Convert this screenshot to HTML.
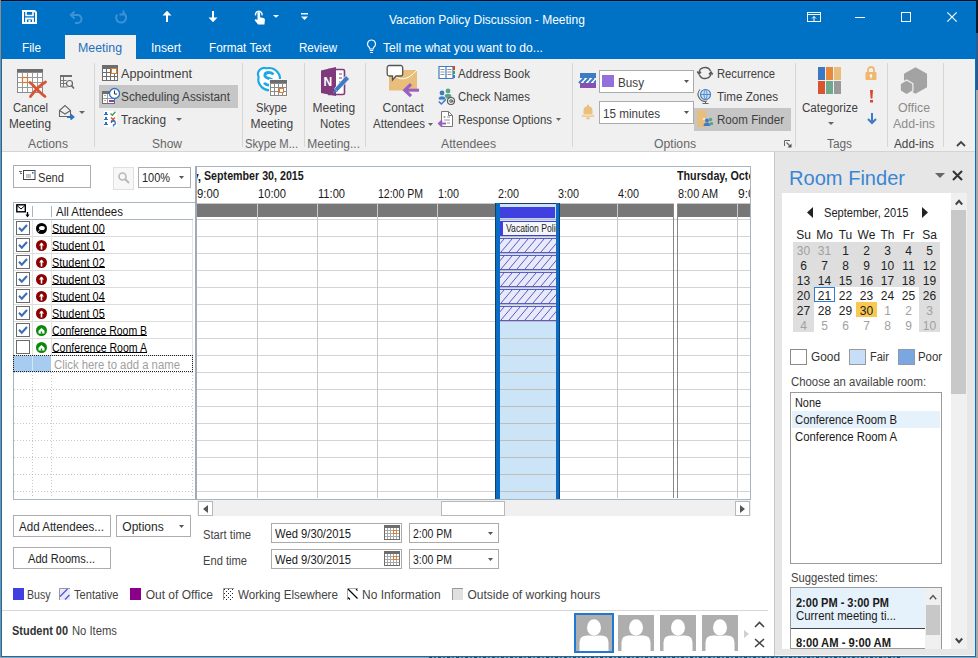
<!DOCTYPE html>
<html><head><meta charset="utf-8"><style>
html,body{margin:0;padding:0;width:978px;height:658px;overflow:hidden;background:#fff;}
.a{position:absolute;box-sizing:border-box;}
.t{white-space:pre;font-family:"Liberation Sans",sans-serif;}
svg.a{overflow:visible;}
</style></head><body>
<div class="a" style="left:0px;top:0px;width:978px;height:658px;background:#ffffff;"></div>
<div class="a" style="left:976px;top:0px;width:2px;height:33px;background:#0b1a2c;"></div>
<div class="a" style="left:976px;top:33px;width:2px;height:57px;background:#2a5a8e;"></div>
<div class="a" style="left:976px;top:90px;width:2px;height:568px;background:#a8a8a8;"></div>
<div class="a" style="left:0px;top:0px;width:1px;height:658px;background:#968a80;"></div>
<div class="a" style="left:0px;top:657px;width:978px;height:1px;background:#a89c94;"></div>
<div class="a" style="left:1px;top:0px;width:975px;height:1px;background:#020a18;"></div>
<div class="a" style="left:1px;top:1px;width:975px;height:58px;background:#0072c6;"></div>
<div class="a" style="left:1px;top:1px;width:975px;height:1px;background:#0a7ad0;"></div>
<div class="a" style="left:1px;top:59px;width:1px;height:598px;background:#0072c6;"></div>
<div class="a" style="left:975px;top:59px;width:1px;height:598px;background:#0072c6;"></div>
<div class="a" style="left:1px;top:656px;width:975px;height:1px;background:#0072c6;"></div>
<div class="a" style="left:2px;top:59px;width:973px;height:92px;background:#f0f0f0;"></div>
<div class="a" style="left:2px;top:151px;width:973px;height:1px;background:#d4d4d4;"></div>
<div class="a" style="left:65px;top:35px;width:71px;height:24px;background:#f0f0f0;"></div>
<div class="a t" style="left:389.00px;top:14.00px;font-size:12.00px;line-height:12.00px;font-weight:400;color:#ffffff;">Vacation Policy Discussion - Meeting</div>
<div class="a t" style="left:22.00px;top:42.00px;font-size:12.00px;line-height:12.00px;font-weight:400;color:#ffffff;transform:scaleX(0.983);transform-origin:left;">File</div>
<div class="a t" style="left:78.00px;top:42.00px;font-size:12.00px;line-height:12.00px;font-weight:400;color:#1e6fbd;transform:scaleX(1.031);transform-origin:left;">Meeting</div>
<div class="a t" style="left:151.00px;top:42.00px;font-size:12.00px;line-height:12.00px;font-weight:400;color:#ffffff;">Insert</div>
<div class="a t" style="left:209.00px;top:42.00px;font-size:12.00px;line-height:12.00px;font-weight:400;color:#ffffff;transform:scaleX(0.982);transform-origin:left;">Format Text</div>
<div class="a t" style="left:299.00px;top:42.00px;font-size:12.00px;line-height:12.00px;font-weight:400;color:#ffffff;transform:scaleX(0.966);transform-origin:left;">Review</div>
<div class="a t" style="left:383.00px;top:42.00px;font-size:12.00px;line-height:12.00px;font-weight:400;color:#ffffff;transform:scaleX(1.012);transform-origin:left;">Tell me what you want to do...</div>
<div class="a" style="left:2px;top:152px;width:773px;height:504px;background:#ffffff;"></div>
<div class="a" style="left:775px;top:152px;width:200px;height:503px;background:#e6e6e6;"></div>
<div class="a" style="left:775px;top:655px;width:200px;height:1px;background:#fbf6f0;"></div>
<div class="a" style="left:774px;top:152px;width:1px;height:504px;background:#c6c6c6;"></div>
<svg class="a" style="left:22px;top:10px;" width="15" height="14" viewBox="0 0 15 14"><path d="M1 1h11.5l1.5 1.5V13H1z" fill="none" stroke="#fff" stroke-width="2"/><path d="M4 1v4.5h7V1" fill="none" stroke="#fff" stroke-width="1.6"/><path d="M4 13V8.5h7V13" fill="none" stroke="#fff" stroke-width="1.8"/><rect x="6.5" y="10" width="2" height="3" fill="#fff"/></svg>
<svg class="a" style="left:68px;top:10px;" width="15" height="14" viewBox="0 0 15 14"><path d="M3.5 5h6a4 4 0 0 1 0 8H7" fill="none" stroke="#3f90d8" stroke-width="2"/><path d="M6.5 1.5L2.8 5l3.7 3.5" fill="none" stroke="#3f90d8" stroke-width="2"/></svg>
<svg class="a" style="left:114px;top:10px;" width="14" height="14" viewBox="0 0 14 14"><path d="M9.5 3.2A5 5 0 1 1 3.2 4.5" fill="none" stroke="#3f90d8" stroke-width="2"/><path d="M9.5 0.5v4h-4" fill="none" stroke="#3f90d8" stroke-width="1.8"/></svg>
<svg class="a" style="left:162px;top:10px;" width="10" height="12" viewBox="0 0 10 12"><path d="M5 12V3" stroke="#fff" stroke-width="2"/><path d="M0.5 5.5L5 0.8l4.5 4.7z" fill="#fff"/></svg>
<svg class="a" style="left:208px;top:11px;" width="10" height="12" viewBox="0 0 10 12"><path d="M5 0v9" stroke="#fff" stroke-width="2"/><path d="M0.5 6.5L5 11.2l4.5-4.7z" fill="#fff"/></svg>
<svg class="a" style="left:253px;top:9px;" width="13" height="16" viewBox="0 0 13 16"><path d="M4.5 9.5V4.2a1.3 1.3 0 0 1 2.6 0V8.3l3.3.8c1 .3 1.6 1 1.5 2l-.5 4.4H5.2L2 11.8c-.6-.7 0-1.8 1-1.5l1.5.7z" fill="#fff"/><path d="M2.6 6.3a3.3 3.3 0 1 1 6.4 0" fill="none" stroke="#fff" stroke-width="1.4"/></svg>
<svg class="a" style="left:273px;top:15px;" width="6" height="3" viewBox="0 0 6 3"><path d="M0 0h6L3 2.8z" fill="#fff"/></svg>
<svg class="a" style="left:301px;top:13px;" width="7" height="8" viewBox="0 0 7 8"><rect x="0" y="0" width="7" height="1.5" fill="#fff"/><path d="M0 3.5h7L3.5 7z" fill="#fff"/></svg>
<svg class="a" style="left:807px;top:12px;" width="14" height="10" viewBox="0 0 14 10"><rect x="0.5" y="0.5" width="13" height="9" fill="none" stroke="#fff"/><path d="M0.5 2.5h13" stroke="#fff"/><path d="M7 9V4.5M5 6.5L7 4.5 9 6.5" fill="none" stroke="#fff"/></svg>
<div class="a" style="left:855px;top:17px;width:10px;height:1px;background:#ffffff;"></div>
<div class="a" style="left:901px;top:12px;width:10px;height:10px;box-shadow:inset 0 0 0 1px #ffffff;"></div>
<svg class="a" style="left:947px;top:12px;" width="10" height="10" viewBox="0 0 10 10"><path d="M0.3 0.3l9.4 9.4M9.7 0.3l-9.4 9.4" stroke="#fff" stroke-width="1.1"/></svg>
<svg class="a" style="left:366px;top:39px;" width="11" height="15" viewBox="0 0 11 15"><path d="M5.5 1a4 4 0 0 0-2.4 7.2c.5.5.7 1 .7 1.8h3.4c0-.8.2-1.3.7-1.8A4 4 0 0 0 5.5 1z" fill="none" stroke="#fff" stroke-width="1.1"/><path d="M3.8 11.5h3.4M4.2 13.5h2.6" stroke="#fff" stroke-width="1.1"/></svg>
<div class="a" style="left:94px;top:63px;width:1px;height:84px;background:#d6d6d6;"></div>
<div class="a" style="left:242px;top:63px;width:1px;height:84px;background:#d6d6d6;"></div>
<div class="a" style="left:304px;top:63px;width:1px;height:84px;background:#d6d6d6;"></div>
<div class="a" style="left:365px;top:63px;width:1px;height:84px;background:#d6d6d6;"></div>
<div class="a" style="left:572px;top:63px;width:1px;height:84px;background:#d6d6d6;"></div>
<div class="a" style="left:795px;top:63px;width:1px;height:84px;background:#d6d6d6;"></div>
<div class="a" style="left:887px;top:63px;width:1px;height:84px;background:#d6d6d6;"></div>
<div class="a t" style="left:28.00px;top:138.00px;font-size:12.00px;line-height:12.00px;font-weight:400;color:#666666;transform:scaleX(1.016);transform-origin:left;">Actions</div>
<div class="a t" style="left:152.00px;top:138.00px;font-size:12.00px;line-height:12.00px;font-weight:400;color:#666666;">Show</div>
<div class="a t" style="left:245.00px;top:138.00px;font-size:12.00px;line-height:12.00px;font-weight:400;color:#666666;transform:scaleX(0.935);transform-origin:left;">Skype M...</div>
<div class="a t" style="left:307.30px;top:138.00px;font-size:12.00px;line-height:12.00px;font-weight:400;color:#666666;">Meeting...</div>
<div class="a t" style="left:441.00px;top:138.00px;font-size:12.00px;line-height:12.00px;font-weight:400;color:#666666;transform:scaleX(1.018);transform-origin:left;">Attendees</div>
<div class="a t" style="left:654.00px;top:138.00px;font-size:12.00px;line-height:12.00px;font-weight:400;color:#666666;transform:scaleX(1.016);transform-origin:left;">Options</div>
<div class="a t" style="left:827.00px;top:138.00px;font-size:12.00px;line-height:12.00px;font-weight:400;color:#666666;transform:scaleX(0.986);transform-origin:left;">Tags</div>
<div class="a t" style="left:894.00px;top:138.00px;font-size:12.00px;line-height:12.00px;font-weight:400;color:#444;transform:scaleX(0.983);transform-origin:left;">Add-ins</div>
<svg class="a" style="left:784px;top:140px;" width="8" height="8" viewBox="0 0 8 8"><path d="M0.5 6V0.5H6" fill="none" stroke="#666"/><path d="M2.5 2.5l3.5 3.5" stroke="#666" stroke-width="1.1"/><path d="M7.5 3.5V7.5H3.5z" fill="#555"/></svg>
<svg class="a" style="left:956px;top:140px;" width="10" height="7" viewBox="0 0 10 7"><path d="M1 6L5 2l4 4" fill="none" stroke="#444" stroke-width="1.8"/></svg>
<svg class="a" style="left:17px;top:69px;" width="30" height="29" viewBox="0 0 30 29"><rect x="0" y="0" width="26" height="3.5" fill="#6d6d6d"/>
<rect x="0.5" y="3.5" width="25" height="20" fill="#fff" stroke="#8a8a8a"/>
<path d="M0.5 8.5h25M0.5 13.5h25M0.5 18.5h25M5.5 3.5v20M10.5 3.5v20M15.5 3.5v20M20.5 3.5v20" stroke="#9a9a9a" stroke-width="1"/>
<rect x="5.5" y="8.5" width="5" height="5" fill="#fff" stroke="#e07a2a" stroke-width="1.2"/>
<path d="M13 13.5c4 3.5 10 10 15 14M28.5 13c-5 3-11 9-15 14.5" fill="none" stroke="#d95532" stroke-width="2.8" stroke-linecap="round"/></svg>
<div class="a t" style="left:12.50px;top:102.00px;font-size:12.00px;line-height:12.00px;font-weight:400;color:#404040;transform:scaleX(0.937);transform-origin:left;">Cancel</div>
<div class="a t" style="left:9.00px;top:118.00px;font-size:12.00px;line-height:12.00px;font-weight:400;color:#404040;transform:scaleX(0.984);transform-origin:left;">Meeting</div>
<svg class="a" style="left:60px;top:75px;" width="15" height="14" viewBox="0 0 15 14"><rect x="0" y="0" width="12" height="2" fill="#6d6d6d"/><path d="M0.5 2v10h7M0.5 5.5h6M0.5 8.5h6M3.5 2v10" fill="none" stroke="#777" stroke-width="1"/><circle cx="9.5" cy="8.5" r="3" fill="#f0f0f0" stroke="#666" stroke-width="1.2"/><path d="M11.5 10.5l2.5 3" stroke="#666" stroke-width="1.5"/></svg>
<svg class="a" style="left:59px;top:104px;" width="16" height="16" viewBox="0 0 16 16"><path d="M0.5 6.5L6 1.5l5.5 5v6H0.5z" fill="none" stroke="#666" stroke-width="1.1"/><path d="M0.5 6.5l5.5 3.5 5.5-3.5" fill="none" stroke="#666" stroke-width="1.1"/><path d="M8 13h6M11.5 10.5L14.5 13l-3 2.5" fill="none" stroke="#2e72c2" stroke-width="1.8"/></svg>
<svg class="a" style="left:79px;top:111px;" width="6" height="3" viewBox="0 0 6 3"><path d="M0 0h6L3 3z" fill="#666"/></svg>
<div class="a" style="left:99px;top:85px;width:139px;height:23px;background:#c6c6c6;"></div>
<svg class="a" style="left:102px;top:65px;" width="16" height="16" viewBox="0 0 16 16"><rect x="0" y="0" width="16" height="16" fill="#6d6d6d"/><rect x="1" y="4" width="3" height="3" fill="#fff"/><rect x="5" y="4" width="3" height="3" fill="#fff"/><rect x="9" y="4" width="3" height="3" fill="#fff"/><rect x="13" y="4" width="2" height="3" fill="#fff"/><rect x="1" y="8" width="3" height="3" fill="#fff"/><rect x="5" y="8" width="3" height="3" fill="#fff"/><rect x="9" y="8" width="3" height="3" fill="#fff"/><rect x="13" y="8" width="2" height="3" fill="#fff"/><rect x="1" y="12" width="3" height="3" fill="#fff"/><rect x="5" y="12" width="3" height="3" fill="#fff"/><rect x="9" y="12" width="3" height="3" fill="#fff"/><rect x="13" y="12" width="2" height="3" fill="#fff"/><rect x="9" y="3" width="6" height="6" fill="#e8782a"/><rect x="10" y="4" width="4" height="4" fill="#fff"/></svg>
<div class="a t" style="left:121.00px;top:68.00px;font-size:12.00px;line-height:12.00px;font-weight:400;color:#404040;transform:scaleX(1.054);transform-origin:left;">Appointment</div>
<svg class="a" style="left:102px;top:88px;" width="18" height="16" viewBox="0 0 18 16"><rect x="0" y="3" width="13" height="13" fill="#6d6d6d"/><rect x="1" y="6" width="11" height="9" fill="#fff"/><rect x="1" y="10" width="11" height="1" fill="#999"/><rect x="5" y="6" width="1" height="9" fill="#999"/><rect x="2" y="7" width="2" height="1" fill="#aaa"/><rect x="2" y="12" width="2" height="1" fill="#aaa"/><rect x="7" y="12" width="5" height="2" fill="#8a3fa8"/><circle cx="12.5" cy="5.5" r="5" fill="#fff" stroke="#2e72c2" stroke-width="1.3"/><path d="M12.5 2.5v3.5h2.5" fill="none" stroke="#333" stroke-width="1"/></svg>
<div class="a t" style="left:121.00px;top:91.00px;font-size:12.00px;line-height:12.00px;font-weight:400;color:#404040;transform:scaleX(0.984);transform-origin:left;">Scheduling Assistant</div>
<svg class="a" style="left:104px;top:111px;" width="13" height="16" viewBox="0 0 13 16"><rect x="0" y="0" width="13" height="16" fill="#fff"/><g fill="#2e72c2"><rect x="1" y="1" width="2" height="2"/><rect x="0" y="3" width="4" height="1"/><rect x="1" y="6" width="2" height="2"/><rect x="0" y="8" width="4" height="1"/><rect x="1" y="11" width="2" height="2"/><rect x="0" y="13" width="4" height="1"/></g><path d="M6.5 2.5l1.8 1.8 3.2-3.6" fill="none" stroke="#3aa04a" stroke-width="1.3"/><path d="M7 6.5l4 4M11 6.5l-4 4" stroke="#d95532" stroke-width="1.4"/><path d="M7.3 12a2 2 0 1 1 2.2 2v1.5" fill="none" stroke="#2e72c2" stroke-width="1.3"/></svg>
<div class="a t" style="left:121.00px;top:114.00px;font-size:12.00px;line-height:12.00px;font-weight:400;color:#404040;transform:scaleX(0.987);transform-origin:left;">Tracking</div>
<svg class="a" style="left:176px;top:118px;" width="6" height="3" viewBox="0 0 6 3"><path d="M0 0h6L3 3z" fill="#666"/></svg>
<svg class="a" style="left:255px;top:65px;" width="34" height="32" viewBox="0 0 34 32"><path d="M14 3a11 11 0 0 1 10.8 13 6.2 6.2 0 0 1-7.6 8.8A11 11 0 0 1 3.6 11.8 6.2 6.2 0 0 1 11.2 3.3 11 11 0 0 1 14 3z" fill="#fff" stroke="#1ea9e6" stroke-width="2.2"/>
<path d="M18.5 9.5c-1-1.3-2.7-2-4.5-2-2.5 0-4.2 1.2-4.2 3 0 3.8 8.8 2.3 8.8 6.4 0 1.9-1.9 3.2-4.6 3.2-2.1 0-3.8-.8-5-2.2" fill="none" stroke="#1ea9e6" stroke-width="2.8"/>
<rect x="14" y="14" width="19" height="18" fill="#f4f4f4"/>
<rect x="15" y="15" width="17" height="16" fill="#8a8a8a"/>
<rect x="15" y="15" width="17" height="3" fill="#6d6d6d"/>
<rect x="16" y="19" width="3" height="3" fill="#fff"/><rect x="20" y="19" width="3" height="3" fill="#fff"/><rect x="24" y="19" width="3" height="3" fill="#fff"/><rect x="28" y="19" width="3" height="3" fill="#fff"/><rect x="16" y="23" width="3" height="3" fill="#fff"/><rect x="20" y="23" width="3" height="3" fill="#fff"/><rect x="24" y="23" width="3" height="3" fill="#fff"/><rect x="28" y="23" width="3" height="3" fill="#fff"/><rect x="16" y="27" width="3" height="3" fill="#fff"/><rect x="20" y="27" width="3" height="3" fill="#fff"/><rect x="24" y="27" width="3" height="3" fill="#fff"/><rect x="28" y="27" width="3" height="3" fill="#fff"/>
<rect x="24" y="23" width="5" height="5" fill="#e8782a"/><rect x="25" y="24" width="3" height="3" fill="#fff"/></svg>
<div class="a t" style="left:256.00px;top:102.00px;font-size:12.00px;line-height:12.00px;font-weight:400;color:#404040;transform:scaleX(0.929);transform-origin:left;">Skype</div>
<div class="a t" style="left:250.50px;top:118.00px;font-size:12.00px;line-height:12.00px;font-weight:400;color:#404040;">Meeting</div>
<svg class="a" style="left:320px;top:66px;" width="30" height="32" viewBox="0 0 30 32"><path d="M9 3.5h14a1.5 1.5 0 0 1 1.5 1.5v22a1.5 1.5 0 0 1-1.5 1.5H9z" fill="#fff" stroke="#80397b" stroke-width="1.6"/>
<path d="M19 8h3M19 12h3M19 16h3" stroke="#80397b" stroke-width="1.2"/>
<path d="M1 4.5L16 1v29L1 27z" fill="#80397b"/>
<text x="3.5" y="20" font-family="Liberation Sans" font-weight="700" font-size="12" fill="#fff">N</text>
<path d="M26 9.5l3.5 3.5-12 12.5-3-3z" fill="#3e7bc4" stroke="#f0f0f0" stroke-width="0.8"/><path d="M14.5 22.5l3 3-4.5 2z" fill="#3e7bc4"/></svg>
<div class="a t" style="left:312.50px;top:102.00px;font-size:12.00px;line-height:12.00px;font-weight:400;color:#404040;">Meeting</div>
<div class="a t" style="left:319.50px;top:118.00px;font-size:12.00px;line-height:12.00px;font-weight:400;color:#404040;transform:scaleX(0.957);transform-origin:left;">Notes</div>
<svg class="a" style="left:386px;top:64px;" width="35" height="34" viewBox="0 0 35 34"><path d="M3 6h28v20.5H3z" fill="#e9be7a"/>
<path d="M6 9q11 13 25-3" fill="none" stroke="#fff" stroke-width="1"/>
<path d="M3.2 1.5h11.5a2 2 0 0 1 2 2v6.5a2 2 0 0 1-2 2H10l-3.5 4v-4H3.2a2 2 0 0 1-2-2V3.5a2 2 0 0 1 2-2z" fill="#fff" stroke="#555" stroke-width="1.3"/>
<path d="M19 26.2H33" stroke="#9a5fc0" stroke-width="3"/>
<path d="M25 20.2L18.8 26.2L25 32.2" fill="none" stroke="#9a5fc0" stroke-width="3.2"/></svg>
<div class="a t" style="left:382.50px;top:102.00px;font-size:12.00px;line-height:12.00px;font-weight:400;color:#404040;">Contact</div>
<div class="a t" style="left:372.50px;top:118.00px;font-size:12.00px;line-height:12.00px;font-weight:400;color:#404040;transform:scaleX(0.962);transform-origin:left;">Attendees</div>
<svg class="a" style="left:428px;top:123px;" width="5" height="3" viewBox="0 0 5 3"><path d="M0 0h5L2.5 3z" fill="#666"/></svg>
<svg class="a" style="left:438px;top:65px;" width="17" height="15" viewBox="0 0 17 15"><path d="M1 1.5h7v12H1zM8 1.5h7v12H8z" fill="#fff" stroke="#3e7bc4" stroke-width="1.2"/>
<path d="M2.5 4.5h4M2.5 7h4M2.5 9.5h4M9.5 4.5h4M9.5 7h4M9.5 9.5h4" stroke="#888" stroke-width="0.9"/>
<rect x="15" y="1" width="2" height="4" fill="#d9462f"/><rect x="15" y="6" width="2" height="3" fill="#3aa04a"/><rect x="15" y="10" width="2" height="3" fill="#3e7bc4"/></svg>
<div class="a t" style="left:458.40px;top:68.00px;font-size:12.00px;line-height:12.00px;font-weight:400;color:#404040;transform:scaleX(0.964);transform-origin:left;">Address Book</div>
<svg class="a" style="left:438px;top:88px;" width="17" height="17" viewBox="0 0 17 17"><circle cx="10" cy="3" r="2.4" fill="#5aa48a"/><path d="M6.5 10.5V8.5a2.5 2.5 0 0 1 2.5-2.5h2a2.5 2.5 0 0 1 2.5 2.5v2z" fill="#5aa48a"/>
<circle cx="4" cy="5" r="2.4" fill="#3e7bc4"/><path d="M0.5 12V10.5a2.5 2.5 0 0 1 2.5-2.5h2a2.5 2.5 0 0 1 2.5 2.5V12z" fill="#3e7bc4" stroke="#f0f0f0" stroke-width="0.8"/>
<path d="M0.8 13.5l2.5 2.5 4.5-4.5" fill="none" stroke="#3e7bc4" stroke-width="1.5"/>
<circle cx="13" cy="13" r="3.5" fill="#f0f0f0" stroke="#555" stroke-width="1.1"/><circle cx="13" cy="13" r="1.3" fill="none" stroke="#555" stroke-width="1"/><path d="M14.3 12v1.8q.8.8 1.5-.3" fill="none" stroke="#555" stroke-width="0.9"/></svg>
<div class="a t" style="left:458.40px;top:91.00px;font-size:12.00px;line-height:12.00px;font-weight:400;color:#404040;transform:scaleX(0.955);transform-origin:left;">Check Names</div>
<svg class="a" style="left:438px;top:111px;" width="16" height="16" viewBox="0 0 16 16"><path d="M3.5 0.5h7l4 4v11h-11z" fill="#fff" stroke="#777" stroke-width="1"/>
<path d="M10.5 0.5v4h4" fill="none" stroke="#777"/>
<circle cx="6.5" cy="6" r="1" fill="#999"/><path d="M9 6h3M6 9h6M9 12h3" stroke="#999"/>
<path d="M1 12.5h7" stroke="#9a5fc0" stroke-width="2"/><path d="M4 9.5l-3 3 3 3" fill="none" stroke="#9a5fc0" stroke-width="2"/></svg>
<div class="a t" style="left:458.40px;top:114.00px;font-size:12.00px;line-height:12.00px;font-weight:400;color:#404040;transform:scaleX(0.952);transform-origin:left;">Response Options</div>
<svg class="a" style="left:556px;top:118px;" width="5" height="3" viewBox="0 0 5 3"><path d="M0 0h5L2.5 3z" fill="#666"/></svg>
<svg class="a" style="left:580px;top:73px;" width="16" height="15" viewBox="0 0 16 15"><rect x="0" y="0" width="16" height="15" fill="#fff"/><rect x="0" y="0" width="16" height="5" fill="#3e7bc4"/><path d="M-1 10L4 5M4 10L9 5M9 10L14 5M14 10L19 5" stroke="#3e7bc4" stroke-width="2.2"/><rect x="0" y="10" width="16" height="5" fill="#8a4fb0"/><rect x="16" y="0" width="4" height="15" fill="#f0f0f0"/></svg>
<div class="a" style="left:599px;top:70px;width:95px;height:23px;background:#ffffff;box-shadow:inset 0 0 0 1px #ababab;"></div>
<div class="a" style="left:602px;top:75px;width:12px;height:12px;background:#9370db;"></div>
<div class="a t" style="left:618.20px;top:77.00px;font-size:12.00px;line-height:12.00px;font-weight:400;color:#404040;transform:scaleX(0.975);transform-origin:left;">Busy</div>
<svg class="a" style="left:684px;top:80px;" width="5" height="3" viewBox="0 0 5 3"><path d="M0 0h5L2.5 3z" fill="#555"/></svg>
<svg class="a" style="left:581px;top:104px;" width="14" height="15" viewBox="0 0 14 15"><path d="M7 0.5a1 1 0 0 1 1 1v.8a4.5 4.5 0 0 1 3.5 4.4v3.5l1.8 1.8v.7H.7v-.7l1.8-1.8V6.7A4.5 4.5 0 0 1 6 2.3v-.8a1 1 0 0 1 1-1z" fill="#e9c07c"/><path d="M2 11h10" stroke="#fff" stroke-width="0.8"/><path d="M5 13.5a2 2 0 0 0 4 0z" fill="#e9c07c"/></svg>
<div class="a" style="left:599px;top:101px;width:95px;height:23px;background:#ffffff;box-shadow:inset 0 0 0 1px #ababab;"></div>
<div class="a t" style="left:602.50px;top:108.00px;font-size:12.00px;line-height:12.00px;font-weight:400;color:#404040;transform:scaleX(0.971);transform-origin:left;">15 minutes</div>
<svg class="a" style="left:684px;top:111px;" width="5" height="3" viewBox="0 0 5 3"><path d="M0 0h5L2.5 3z" fill="#555"/></svg>
<svg class="a" style="left:697px;top:66px;" width="16" height="14" viewBox="0 0 16 14"><path d="M2 7.5A6 5.8 0 0 1 13.5 5" fill="none" stroke="#555" stroke-width="1.4"/><path d="M14 6.5A6 5.8 0 0 1 2.5 9" fill="none" stroke="#555" stroke-width="1.4"/><path d="M0.3 5.5L2 8l2-2.3" fill="none" stroke="#555" stroke-width="1.4"/><path d="M12 8.5L14 6l1.7 2.5" fill="none" stroke="#555" stroke-width="1.4"/></svg>
<div class="a t" style="left:716.50px;top:68.00px;font-size:12.00px;line-height:12.00px;font-weight:400;color:#404040;transform:scaleX(0.935);transform-origin:left;">Recurrence</div>
<svg class="a" style="left:699px;top:88px;" width="13" height="16" viewBox="0 0 13 16"><circle cx="6.5" cy="6.5" r="5" fill="#cfe0f3" stroke="#3e7bc4" stroke-width="1.1"/><path d="M1.5 6.5h10M6.5 1.5c-2 2.5-2 7.5 0 10M6.5 1.5c2 2.5 2 7.5 0 10" fill="none" stroke="#3e7bc4" stroke-width="0.8"/><path d="M1 1.5a7 7 0 0 0 7 11.5M6.5 13v2M3.5 15.5h6" fill="none" stroke="#666" stroke-width="1.1"/></svg>
<div class="a t" style="left:716.50px;top:91.00px;font-size:12.00px;line-height:12.00px;font-weight:400;color:#404040;transform:scaleX(0.970);transform-origin:left;">Time Zones</div>
<div class="a" style="left:694px;top:108px;width:97px;height:23px;background:#c6c6c6;"></div>
<svg class="a" style="left:697px;top:110px;" width="16" height="17" viewBox="0 0 16 17"><rect x="0" y="0" width="9" height="17" fill="#e9be7a"/><circle cx="7" cy="9" r="0.9" fill="#fff"/><circle cx="10" cy="10.5" r="2" fill="#3e7bc4"/><path d="M6.5 16a3.5 3.5 0 0 1 7 0z" fill="#3e7bc4"/><circle cx="13.5" cy="9.5" r="1.8" fill="#5aa48a"/><path d="M11.5 15a3 3 0 0 1 4.5-2.5V15z" fill="#5aa48a"/></svg>
<div class="a t" style="left:716.50px;top:114.00px;font-size:12.00px;line-height:12.00px;font-weight:400;color:#404040;transform:scaleX(0.966);transform-origin:left;">Room Finder</div>
<svg class="a" style="left:818px;top:67px;" width="24" height="28" viewBox="0 0 24 28"><rect x="0" y="0" width="7" height="13" fill="#3b78c2"/><rect x="8" y="0" width="7" height="13" fill="#e8883a"/><rect x="16" y="0" width="7" height="13" fill="#e9be7a"/><rect x="0" y="14" width="7" height="13" fill="#d9552f"/><rect x="8" y="14" width="7" height="13" fill="#6fa88c"/><rect x="16" y="14" width="7" height="13" fill="#999"/></svg>
<div class="a t" style="left:802.00px;top:102.00px;font-size:12.00px;line-height:12.00px;font-weight:400;color:#404040;transform:scaleX(0.965);transform-origin:left;">Categorize</div>
<svg class="a" style="left:827.5px;top:122px;" width="6" height="3" viewBox="0 0 6 3"><path d="M0 0h6L3 3z" fill="#666"/></svg>
<svg class="a" style="left:865px;top:66px;" width="12" height="14" viewBox="0 0 12 14"><path d="M3 6V4a3 3 0 0 1 6 0v2" fill="none" stroke="#f0b86e" stroke-width="1.8"/><rect x="0.5" y="6" width="11" height="8" rx="1" fill="#f0b86e"/><circle cx="6" cy="9.5" r="1.2" fill="#fff"/><rect x="5.5" y="10" width="1" height="2.5" fill="#fff"/></svg>
<svg class="a" style="left:869px;top:90px;" width="5" height="13" viewBox="0 0 5 13"><path d="M1 0h3l-.6 8.5H1.6z" fill="#d9462f"/><rect x="1" y="10" width="3" height="2.5" fill="#d9462f"/></svg>
<svg class="a" style="left:867px;top:113px;" width="10" height="12" viewBox="0 0 10 12"><path d="M5 0v10M1 6l4 4 4-4" fill="none" stroke="#3e7bc4" stroke-width="2"/></svg>
<svg class="a" style="left:899px;top:67px;" width="30" height="28" viewBox="0 0 30 28"><path d="M16.50 0.20L28.02 6.85L28.02 20.15L16.50 26.80L4.98 20.15L4.98 6.85z" fill="#a3a3a3"/><path d="M7.60 12.30L14.53 16.30L14.53 24.30L7.60 28.30L0.67 24.30L0.67 16.30z" fill="#f0f0f0"/><path d="M7.60 13.70L13.32 17.00L13.32 23.60L7.60 26.90L1.88 23.60L1.88 17.00z" fill="#a3a3a3"/></svg>
<div class="a t" style="left:898.00px;top:102.00px;font-size:12.00px;line-height:12.00px;font-weight:400;color:#8c8c8c;transform:scaleX(1.028);transform-origin:left;">Office</div>
<div class="a t" style="left:893.00px;top:118.00px;font-size:12.00px;line-height:12.00px;font-weight:400;color:#8c8c8c;transform:scaleX(1.032);transform-origin:left;">Add-ins</div>
<div class="a" style="left:943px;top:63px;width:1px;height:84px;background:#d6d6d6;"></div>
<div class="a" style="left:13px;top:165px;width:78px;height:23px;background:#ffffff;box-shadow:inset 0 0 0 1px #adadad;"></div>
<svg class="a" style="left:19px;top:170px;" width="17" height="11" viewBox="0 0 17 11"><path d="M0 1.5h3M1 3.5h2M1.5 1.5v1" stroke="#555" stroke-width="0.9"/><rect x="4.5" y="0.5" width="11.5" height="9" fill="#fff" stroke="#444"/><path d="M7 5h5M7 7h5" stroke="#777" stroke-width="0.9"/><rect x="13" y="2" width="1.6" height="1.6" fill="#2e72c2"/></svg>
<div class="a t" style="left:38.00px;top:172.00px;font-size:12.00px;line-height:12.00px;font-weight:400;color:#333;transform:scaleX(0.928);transform-origin:left;">Send</div>
<div class="a" style="left:113px;top:167px;width:21px;height:23px;background:#f7f7f7;box-shadow:inset 0 0 0 1px #e0e0e0;"></div>
<svg class="a" style="left:118px;top:172px;" width="12" height="12" viewBox="0 0 12 12"><circle cx="4.5" cy="4.5" r="3.5" fill="none" stroke="#b8b8b8" stroke-width="1.6"/><path d="M7 7l4 4" stroke="#b8b8b8" stroke-width="2"/></svg>
<div class="a" style="left:138px;top:167px;width:53px;height:21px;background:#ffffff;box-shadow:inset 0 0 0 1px #adadad;"></div>
<div class="a t" style="left:142.00px;top:172.00px;font-size:12.00px;line-height:12.00px;font-weight:400;color:#262626;transform:scaleX(0.912);transform-origin:left;">100%</div>
<svg class="a" style="left:179px;top:176px;" width="5" height="3" viewBox="0 0 5 3"><path d="M0 0h5L2.5 3z" fill="#555"/></svg>
<div class="a" style="left:13px;top:202px;width:182px;height:1px;background:#a8b4c0;"></div>
<div class="a" style="left:13px;top:202px;width:1px;height:298px;background:#a8b4c0;"></div>
<div class="a" style="left:13px;top:499px;width:738px;height:1px;background:#a8b4c0;"></div>
<div class="a" style="left:13px;top:219px;width:180px;height:1px;background:#a8b4c0;"></div>
<div class="a" style="left:32px;top:206px;width:1px;height:11px;background:#a8b4c0;"></div>
<div class="a" style="left:51px;top:206px;width:1px;height:11px;background:#a8b4c0;"></div>
<svg class="a" style="left:16px;top:204px;" width="16" height="14" viewBox="0 0 16 14"><rect x="0.8" y="0.8" width="8.5" height="7" fill="#fff" stroke="#000" stroke-width="1.4"/><path d="M1 1.5l4 3.5 4-3.5" fill="none" stroke="#000" stroke-width="1"/><path d="M11.5 8v4.5" stroke="#000" stroke-width="1.3"/><path d="M9.5 10.5l2 2.8 2-2.8z" fill="#000"/></svg>
<div class="a t" style="left:55.50px;top:206.00px;font-size:12.00px;line-height:12.00px;font-weight:400;color:#1a1a1a;transform:scaleX(0.956);transform-origin:left;">All Attendees</div>
<div class="a" style="left:14px;top:236px;width:179px;height:1px;background:#dcdcdc;"></div>
<div class="a" style="left:14px;top:253px;width:179px;height:1px;background:#dcdcdc;"></div>
<div class="a" style="left:14px;top:270px;width:179px;height:1px;background:#dcdcdc;"></div>
<div class="a" style="left:14px;top:287px;width:179px;height:1px;background:#dcdcdc;"></div>
<div class="a" style="left:14px;top:304px;width:179px;height:1px;background:#dcdcdc;"></div>
<div class="a" style="left:14px;top:321px;width:179px;height:1px;background:#dcdcdc;"></div>
<div class="a" style="left:14px;top:338px;width:179px;height:1px;background:#dcdcdc;"></div>
<div class="a" style="left:14px;top:355px;width:179px;height:1px;background:#dcdcdc;"></div>
<div class="a" style="left:14px;top:372px;width:179px;height:1px;background:repeating-linear-gradient(90deg,#c8c8c8 0 1px,transparent 1px 3px)"></div>
<div class="a" style="left:14px;top:389px;width:179px;height:1px;background:repeating-linear-gradient(90deg,#c8c8c8 0 1px,transparent 1px 3px)"></div>
<div class="a" style="left:14px;top:406px;width:179px;height:1px;background:repeating-linear-gradient(90deg,#c8c8c8 0 1px,transparent 1px 3px)"></div>
<div class="a" style="left:14px;top:423px;width:179px;height:1px;background:repeating-linear-gradient(90deg,#c8c8c8 0 1px,transparent 1px 3px)"></div>
<div class="a" style="left:14px;top:440px;width:179px;height:1px;background:repeating-linear-gradient(90deg,#c8c8c8 0 1px,transparent 1px 3px)"></div>
<div class="a" style="left:14px;top:457px;width:179px;height:1px;background:repeating-linear-gradient(90deg,#c8c8c8 0 1px,transparent 1px 3px)"></div>
<div class="a" style="left:14px;top:474px;width:179px;height:1px;background:repeating-linear-gradient(90deg,#c8c8c8 0 1px,transparent 1px 3px)"></div>
<div class="a" style="left:14px;top:491px;width:179px;height:1px;background:repeating-linear-gradient(90deg,#c8c8c8 0 1px,transparent 1px 3px)"></div>
<div class="a" style="left:32px;top:220px;width:1px;height:135px;background:#e4e4e4;"></div>
<div class="a" style="left:51px;top:220px;width:1px;height:135px;background:#e4e4e4;"></div>
<div class="a" style="left:32px;top:372px;width:1px;height:126px;background:repeating-linear-gradient(180deg,#c8c8c8 0 1px,transparent 1px 3px)"></div>
<div class="a" style="left:51px;top:372px;width:1px;height:126px;background:repeating-linear-gradient(180deg,#c8c8c8 0 1px,transparent 1px 3px)"></div>
<div class="a" style="left:192px;top:372px;width:1px;height:126px;background:repeating-linear-gradient(180deg,#c8c8c8 0 1px,transparent 1px 3px)"></div>
<div class="a" style="left:192px;top:220px;width:1px;height:152px;background:#e4e4e4;"></div>
<div class="a" style="left:16px;top:221px;width:14px;height:14px;background:#ffffff;box-shadow:inset 0 0 0 1px #6a6a6a;"></div>
<svg class="a" style="left:18px;top:224px;" width="10" height="8" viewBox="0 0 10 8"><path d="M1 3.8l2.8 3L9 1" fill="none" stroke="#3a70b8" stroke-width="2.1"/></svg>
<svg class="a" style="left:36px;top:223px;" width="11" height="11" viewBox="0 0 11 11"><circle cx="5.5" cy="5.5" r="5.5" fill="#000"/><ellipse cx="5.9" cy="5" rx="2.9" ry="2.1" fill="#fff"/><path d="M3.5 7.2l-1.3 1.6" stroke="#fff" stroke-width="0.9"/></svg>
<div class="a t" style="left:52.00px;top:223.00px;font-size:12.00px;line-height:12.00px;font-weight:400;color:#000;transform:scaleX(0.908);transform-origin:left;">Student 00</div>
<div class="a" style="left:52px;top:233px;width:52.7px;height:1px;background:#000;"></div>
<div class="a" style="left:16px;top:238px;width:14px;height:14px;background:#ffffff;box-shadow:inset 0 0 0 1px #6a6a6a;"></div>
<svg class="a" style="left:18px;top:241px;" width="10" height="8" viewBox="0 0 10 8"><path d="M1 3.8l2.8 3L9 1" fill="none" stroke="#3a70b8" stroke-width="2.1"/></svg>
<svg class="a" style="left:36px;top:240px;" width="11" height="11" viewBox="0 0 11 11"><circle cx="5.5" cy="5.5" r="5.5" fill="#8b0000"/><path d="M5.5 9.5V3" stroke="#fff" stroke-width="1.6"/><path d="M3 5.5l2.5-3 2.5 3z" fill="#fff"/></svg>
<div class="a t" style="left:52.00px;top:240.00px;font-size:12.00px;line-height:12.00px;font-weight:400;color:#000;transform:scaleX(0.908);transform-origin:left;">Student 01</div>
<div class="a" style="left:52px;top:250px;width:52.7px;height:1px;background:#000;"></div>
<div class="a" style="left:16px;top:255px;width:14px;height:14px;background:#ffffff;box-shadow:inset 0 0 0 1px #6a6a6a;"></div>
<svg class="a" style="left:18px;top:258px;" width="10" height="8" viewBox="0 0 10 8"><path d="M1 3.8l2.8 3L9 1" fill="none" stroke="#3a70b8" stroke-width="2.1"/></svg>
<svg class="a" style="left:36px;top:257px;" width="11" height="11" viewBox="0 0 11 11"><circle cx="5.5" cy="5.5" r="5.5" fill="#8b0000"/><path d="M5.5 9.5V3" stroke="#fff" stroke-width="1.6"/><path d="M3 5.5l2.5-3 2.5 3z" fill="#fff"/></svg>
<div class="a t" style="left:52.00px;top:257.00px;font-size:12.00px;line-height:12.00px;font-weight:400;color:#000;transform:scaleX(0.908);transform-origin:left;">Student 02</div>
<div class="a" style="left:52px;top:267px;width:52.7px;height:1px;background:#000;"></div>
<div class="a" style="left:16px;top:272px;width:14px;height:14px;background:#ffffff;box-shadow:inset 0 0 0 1px #6a6a6a;"></div>
<svg class="a" style="left:18px;top:275px;" width="10" height="8" viewBox="0 0 10 8"><path d="M1 3.8l2.8 3L9 1" fill="none" stroke="#3a70b8" stroke-width="2.1"/></svg>
<svg class="a" style="left:36px;top:274px;" width="11" height="11" viewBox="0 0 11 11"><circle cx="5.5" cy="5.5" r="5.5" fill="#8b0000"/><path d="M5.5 9.5V3" stroke="#fff" stroke-width="1.6"/><path d="M3 5.5l2.5-3 2.5 3z" fill="#fff"/></svg>
<div class="a t" style="left:52.00px;top:274.00px;font-size:12.00px;line-height:12.00px;font-weight:400;color:#000;transform:scaleX(0.908);transform-origin:left;">Student 03</div>
<div class="a" style="left:52px;top:284px;width:52.7px;height:1px;background:#000;"></div>
<div class="a" style="left:16px;top:289px;width:14px;height:14px;background:#ffffff;box-shadow:inset 0 0 0 1px #6a6a6a;"></div>
<svg class="a" style="left:18px;top:292px;" width="10" height="8" viewBox="0 0 10 8"><path d="M1 3.8l2.8 3L9 1" fill="none" stroke="#3a70b8" stroke-width="2.1"/></svg>
<svg class="a" style="left:36px;top:291px;" width="11" height="11" viewBox="0 0 11 11"><circle cx="5.5" cy="5.5" r="5.5" fill="#8b0000"/><path d="M5.5 9.5V3" stroke="#fff" stroke-width="1.6"/><path d="M3 5.5l2.5-3 2.5 3z" fill="#fff"/></svg>
<div class="a t" style="left:52.00px;top:291.00px;font-size:12.00px;line-height:12.00px;font-weight:400;color:#000;transform:scaleX(0.908);transform-origin:left;">Student 04</div>
<div class="a" style="left:52px;top:301px;width:52.7px;height:1px;background:#000;"></div>
<div class="a" style="left:16px;top:306px;width:14px;height:14px;background:#ffffff;box-shadow:inset 0 0 0 1px #6a6a6a;"></div>
<svg class="a" style="left:18px;top:309px;" width="10" height="8" viewBox="0 0 10 8"><path d="M1 3.8l2.8 3L9 1" fill="none" stroke="#3a70b8" stroke-width="2.1"/></svg>
<svg class="a" style="left:36px;top:308px;" width="11" height="11" viewBox="0 0 11 11"><circle cx="5.5" cy="5.5" r="5.5" fill="#8b0000"/><path d="M5.5 9.5V3" stroke="#fff" stroke-width="1.6"/><path d="M3 5.5l2.5-3 2.5 3z" fill="#fff"/></svg>
<div class="a t" style="left:52.00px;top:308.00px;font-size:12.00px;line-height:12.00px;font-weight:400;color:#000;transform:scaleX(0.908);transform-origin:left;">Student 05</div>
<div class="a" style="left:52px;top:318px;width:52.7px;height:1px;background:#000;"></div>
<div class="a" style="left:16px;top:323px;width:14px;height:14px;background:#ffffff;box-shadow:inset 0 0 0 1px #6a6a6a;"></div>
<svg class="a" style="left:18px;top:326px;" width="10" height="8" viewBox="0 0 10 8"><path d="M1 3.8l2.8 3L9 1" fill="none" stroke="#3a70b8" stroke-width="2.1"/></svg>
<svg class="a" style="left:36px;top:325px;" width="11" height="11" viewBox="0 0 11 11"><circle cx="5.5" cy="5.5" r="5.5" fill="#0a8a0a"/><path d="M2.5 5.8L5.5 3l3 2.8V8.5h-6z" fill="#fff"/><rect x="4.8" y="6.5" width="1.4" height="2" fill="#0a8a0a"/></svg>
<div class="a t" style="left:52.00px;top:325.00px;font-size:12.00px;line-height:12.00px;font-weight:400;color:#000;transform:scaleX(0.874);transform-origin:left;">Conference Room B</div>
<div class="a" style="left:52px;top:335px;width:95px;height:1px;background:#000;"></div>
<div class="a" style="left:16px;top:340px;width:14px;height:14px;background:#ffffff;box-shadow:inset 0 0 0 1px #6a6a6a;"></div>
<svg class="a" style="left:36px;top:342px;" width="11" height="11" viewBox="0 0 11 11"><circle cx="5.5" cy="5.5" r="5.5" fill="#0a8a0a"/><path d="M2.5 5.8L5.5 3l3 2.8V8.5h-6z" fill="#fff"/><rect x="4.8" y="6.5" width="1.4" height="2" fill="#0a8a0a"/></svg>
<div class="a t" style="left:52.00px;top:342.00px;font-size:12.00px;line-height:12.00px;font-weight:400;color:#000;transform:scaleX(0.879);transform-origin:left;">Conference Room A</div>
<div class="a" style="left:52px;top:352px;width:95px;height:1px;background:#000;"></div>
<div class="a" style="left:14px;top:356px;width:37px;height:16px;background:#a8ccf0;"></div>
<div class="a" style="left:32px;top:356px;width:1px;height:16px;background:#d8e6f4;"></div>
<div class="a" style="left:13px;top:355px;width:180px;height:17px;border:1px dotted #222;"></div>
<div class="a t" style="left:53.50px;top:359.00px;font-size:12.00px;line-height:12.00px;font-weight:400;color:#a0a0a0;transform:scaleX(0.944);transform-origin:left;">Click here to add a name</div>
<div class="a" style="left:195px;top:166px;width:2px;height:334px;background:#a0aab8;"></div>
<div class="a" style="left:197px;top:166px;width:554px;height:1px;background:#a8b4c0;"></div>
<div class="a" style="left:750px;top:166px;width:1px;height:334px;background:#a8b4c0;"></div>
<div class="a" style="left:197px;top:168px;width:6px;height:16px;overflow:hidden"><div class="t" style="position:absolute;left:-5px;top:3px;font-size:12px;line-height:12px;font-weight:700;color:#1a1a1a">y,</div></div>
<div class="a t" style="left:204.40px;top:170.00px;font-size:12.00px;line-height:12.00px;font-weight:700;color:#1a1a1a;transform:scaleX(0.890);transform-origin:left;">September 30, 2015</div>
<div class="a" style="left:677px;top:168px;width:73px;height:16px;overflow:hidden"><div class="t" style="position:absolute;left:0;top:2px;font-size:12px;line-height:12px;font-weight:700;color:#1a1a1a;transform:scaleX(0.895);transform-origin:left">Thursday, October 1, 2015</div></div>
<div class="a t" style="left:197.00px;top:188.00px;font-size:12.00px;line-height:12.00px;font-weight:400;color:#1a1a1a;transform:scaleX(0.942);transform-origin:left;">9:00</div>
<div class="a t" style="left:258.00px;top:188.00px;font-size:12.00px;line-height:12.00px;font-weight:400;color:#1a1a1a;transform:scaleX(0.932);transform-origin:left;">10:00</div>
<div class="a t" style="left:318.00px;top:188.00px;font-size:12.00px;line-height:12.00px;font-weight:400;color:#1a1a1a;transform:scaleX(0.927);transform-origin:left;">11:00</div>
<div class="a t" style="left:378.00px;top:188.00px;font-size:12.00px;line-height:12.00px;font-weight:400;color:#1a1a1a;transform:scaleX(0.876);transform-origin:left;">12:00 PM</div>
<div class="a t" style="left:438.00px;top:188.00px;font-size:12.00px;line-height:12.00px;font-weight:400;color:#1a1a1a;transform:scaleX(0.899);transform-origin:left;">1:00</div>
<div class="a t" style="left:498.00px;top:188.00px;font-size:12.00px;line-height:12.00px;font-weight:400;color:#1a1a1a;transform:scaleX(0.899);transform-origin:left;">2:00</div>
<div class="a t" style="left:558.00px;top:188.00px;font-size:12.00px;line-height:12.00px;font-weight:400;color:#1a1a1a;transform:scaleX(0.899);transform-origin:left;">3:00</div>
<div class="a t" style="left:618.00px;top:188.00px;font-size:12.00px;line-height:12.00px;font-weight:400;color:#1a1a1a;transform:scaleX(0.899);transform-origin:left;">4:00</div>
<div class="a t" style="left:678.00px;top:188.00px;font-size:12.00px;line-height:12.00px;font-weight:400;color:#1a1a1a;transform:scaleX(0.908);transform-origin:left;">8:00 AM</div>
<div class="a" style="left:738px;top:186px;width:12px;height:16px;overflow:hidden"><div class="t" style="position:absolute;left:0;top:2px;font-size:12px;line-height:12px;color:#1a1a1a">9:00</div></div>
<div class="a" style="left:197px;top:203px;width:553px;height:1px;background:#c8c8c8;"></div>
<div class="a" style="left:197px;top:204px;width:553px;height:13px;background:#777777;"></div>
<div class="a" style="left:674px;top:203px;width:3px;height:14px;background:#ffffff;"></div>
<div class="a" style="left:197px;top:219px;width:553px;height:1px;background:#d4d4d4;"></div>
<div class="a" style="left:197px;top:236px;width:553px;height:1px;background:#d4d4d4;"></div>
<div class="a" style="left:197px;top:253px;width:553px;height:1px;background:#d4d4d4;"></div>
<div class="a" style="left:197px;top:270px;width:553px;height:1px;background:#d4d4d4;"></div>
<div class="a" style="left:197px;top:287px;width:553px;height:1px;background:#d4d4d4;"></div>
<div class="a" style="left:197px;top:304px;width:553px;height:1px;background:#d4d4d4;"></div>
<div class="a" style="left:197px;top:321px;width:553px;height:1px;background:#d4d4d4;"></div>
<div class="a" style="left:197px;top:338px;width:553px;height:1px;background:#d4d4d4;"></div>
<div class="a" style="left:197px;top:355px;width:553px;height:1px;background:#d4d4d4;"></div>
<div class="a" style="left:197px;top:372px;width:553px;height:1px;background:#d4d4d4;"></div>
<div class="a" style="left:197px;top:389px;width:553px;height:1px;background:#d4d4d4;"></div>
<div class="a" style="left:197px;top:406px;width:553px;height:1px;background:#d4d4d4;"></div>
<div class="a" style="left:197px;top:423px;width:553px;height:1px;background:#d4d4d4;"></div>
<div class="a" style="left:197px;top:440px;width:553px;height:1px;background:#d4d4d4;"></div>
<div class="a" style="left:197px;top:457px;width:553px;height:1px;background:#d4d4d4;"></div>
<div class="a" style="left:197px;top:474px;width:553px;height:1px;background:#d4d4d4;"></div>
<div class="a" style="left:197px;top:491px;width:553px;height:1px;background:#d4d4d4;"></div>
<div class="a" style="left:257px;top:204px;width:1px;height:294px;background:#c8c8c8;"></div>
<div class="a" style="left:317px;top:204px;width:1px;height:294px;background:#c8c8c8;"></div>
<div class="a" style="left:377px;top:204px;width:1px;height:294px;background:#c8c8c8;"></div>
<div class="a" style="left:437px;top:204px;width:1px;height:294px;background:#c8c8c8;"></div>
<div class="a" style="left:617px;top:204px;width:1px;height:294px;background:#c8c8c8;"></div>
<div class="a" style="left:737px;top:204px;width:1px;height:294px;background:#c8c8c8;"></div>
<div class="a" style="left:673px;top:204px;width:1px;height:294px;background:#888888;"></div>
<div class="a" style="left:677px;top:204px;width:1px;height:294px;background:#888888;"></div>
<div class="a" style="left:674px;top:217px;width:3px;height:2px;background:#ffffff;"></div>
<div class="a" style="left:499px;top:204px;width:57px;height:295px;background:#cce4f7;"></div>
<div class="a" style="left:495px;top:203px;width:65px;height:1px;background:#1a3a5a;"></div>
<div class="a" style="left:495px;top:203px;width:1px;height:296px;background:#0f3f6f;"></div>
<div class="a" style="left:496px;top:203px;width:4px;height:296px;background:#0a6cc4;"></div>
<div class="a" style="left:556px;top:203px;width:3px;height:296px;background:#0a6cc4;"></div>
<div class="a" style="left:559px;top:203px;width:1px;height:296px;background:#0f3f6f;"></div>
<div class="a" style="left:500px;top:207px;width:55px;height:11px;background:#4040e0;"></div>
<div class="a" style="left:500px;top:218px;width:55px;height:1px;background:#b8d4ec;"></div>
<div class="a" style="left:500px;top:219px;width:56px;height:1px;background:#c0bcb8;"></div>
<div class="a" style="left:500px;top:236px;width:56px;height:1px;background:#c0bcb8;"></div>
<div class="a" style="left:500px;top:253px;width:56px;height:1px;background:#c0bcb8;"></div>
<div class="a" style="left:500px;top:270px;width:56px;height:1px;background:#c0bcb8;"></div>
<div class="a" style="left:500px;top:287px;width:56px;height:1px;background:#c0bcb8;"></div>
<div class="a" style="left:500px;top:304px;width:56px;height:1px;background:#c0bcb8;"></div>
<div class="a" style="left:500px;top:321px;width:56px;height:1px;background:#c0bcb8;"></div>
<div class="a" style="left:500px;top:338px;width:56px;height:1px;background:#c0bcb8;"></div>
<div class="a" style="left:500px;top:355px;width:56px;height:1px;background:#c0bcb8;"></div>
<div class="a" style="left:500px;top:372px;width:56px;height:1px;background:#c0bcb8;"></div>
<div class="a" style="left:500px;top:389px;width:56px;height:1px;background:#c0bcb8;"></div>
<div class="a" style="left:500px;top:406px;width:56px;height:1px;background:#c0bcb8;"></div>
<div class="a" style="left:500px;top:423px;width:56px;height:1px;background:#c0bcb8;"></div>
<div class="a" style="left:500px;top:440px;width:56px;height:1px;background:#c0bcb8;"></div>
<div class="a" style="left:500px;top:457px;width:56px;height:1px;background:#c0bcb8;"></div>
<div class="a" style="left:500px;top:474px;width:56px;height:1px;background:#c0bcb8;"></div>
<div class="a" style="left:500px;top:491px;width:56px;height:1px;background:#c0bcb8;"></div>
<div class="a" style="left:500px;top:221px;width:56px;height:15px;background:#4040e0;"></div>
<div class="a" style="left:503px;top:222px;width:53px;height:13px;background:#f4f6fc;"></div>
<div class="a" style="left:503px;top:222px;width:53px;height:13px;overflow:hidden"><div class="t" style="position:absolute;left:3px;top:2px;font-size:10px;line-height:10px;color:#222;transform:scaleX(0.86);transform-origin:left">Vacation Policy</div></div>
<svg class="a" style="left:500px;top:238px;" width="56" height="15" viewBox="0 0 56 15"><defs><clipPath id="hc1"><rect x="0" y="0" width="56" height="15"/></clipPath></defs><g clip-path="url(#hc1)"><rect x="0" y="0" width="56" height="15" fill="#e8eafa"/><path d="M-15 14L-4 1" stroke="#5a5ac8" stroke-width="1"/><path d="M-7 14L4 1" stroke="#5a5ac8" stroke-width="1"/><path d="M1 14L12 1" stroke="#5a5ac8" stroke-width="1"/><path d="M9 14L20 1" stroke="#5a5ac8" stroke-width="1"/><path d="M17 14L28 1" stroke="#5a5ac8" stroke-width="1"/><path d="M25 14L36 1" stroke="#5a5ac8" stroke-width="1"/><path d="M33 14L44 1" stroke="#5a5ac8" stroke-width="1"/><path d="M41 14L52 1" stroke="#5a5ac8" stroke-width="1"/><path d="M49 14L60 1" stroke="#5a5ac8" stroke-width="1"/><path d="M57 14L68 1" stroke="#5a5ac8" stroke-width="1"/><path d="M65 14L76 1" stroke="#5a5ac8" stroke-width="1"/></g><path d="M0 0.5H56M0 14.5H56" stroke="#5a5ac8" stroke-width="1"/></svg>
<svg class="a" style="left:500px;top:255px;" width="56" height="15" viewBox="0 0 56 15"><defs><clipPath id="hc2"><rect x="0" y="0" width="56" height="15"/></clipPath></defs><g clip-path="url(#hc2)"><rect x="0" y="0" width="56" height="15" fill="#e8eafa"/><path d="M-15 14L-4 1" stroke="#5a5ac8" stroke-width="1"/><path d="M-7 14L4 1" stroke="#5a5ac8" stroke-width="1"/><path d="M1 14L12 1" stroke="#5a5ac8" stroke-width="1"/><path d="M9 14L20 1" stroke="#5a5ac8" stroke-width="1"/><path d="M17 14L28 1" stroke="#5a5ac8" stroke-width="1"/><path d="M25 14L36 1" stroke="#5a5ac8" stroke-width="1"/><path d="M33 14L44 1" stroke="#5a5ac8" stroke-width="1"/><path d="M41 14L52 1" stroke="#5a5ac8" stroke-width="1"/><path d="M49 14L60 1" stroke="#5a5ac8" stroke-width="1"/><path d="M57 14L68 1" stroke="#5a5ac8" stroke-width="1"/><path d="M65 14L76 1" stroke="#5a5ac8" stroke-width="1"/></g><path d="M0 0.5H56M0 14.5H56" stroke="#5a5ac8" stroke-width="1"/></svg>
<svg class="a" style="left:500px;top:272px;" width="56" height="15" viewBox="0 0 56 15"><defs><clipPath id="hc3"><rect x="0" y="0" width="56" height="15"/></clipPath></defs><g clip-path="url(#hc3)"><rect x="0" y="0" width="56" height="15" fill="#e8eafa"/><path d="M-15 14L-4 1" stroke="#5a5ac8" stroke-width="1"/><path d="M-7 14L4 1" stroke="#5a5ac8" stroke-width="1"/><path d="M1 14L12 1" stroke="#5a5ac8" stroke-width="1"/><path d="M9 14L20 1" stroke="#5a5ac8" stroke-width="1"/><path d="M17 14L28 1" stroke="#5a5ac8" stroke-width="1"/><path d="M25 14L36 1" stroke="#5a5ac8" stroke-width="1"/><path d="M33 14L44 1" stroke="#5a5ac8" stroke-width="1"/><path d="M41 14L52 1" stroke="#5a5ac8" stroke-width="1"/><path d="M49 14L60 1" stroke="#5a5ac8" stroke-width="1"/><path d="M57 14L68 1" stroke="#5a5ac8" stroke-width="1"/><path d="M65 14L76 1" stroke="#5a5ac8" stroke-width="1"/></g><path d="M0 0.5H56M0 14.5H56" stroke="#5a5ac8" stroke-width="1"/></svg>
<svg class="a" style="left:500px;top:289px;" width="56" height="15" viewBox="0 0 56 15"><defs><clipPath id="hc4"><rect x="0" y="0" width="56" height="15"/></clipPath></defs><g clip-path="url(#hc4)"><rect x="0" y="0" width="56" height="15" fill="#e8eafa"/><path d="M-15 14L-4 1" stroke="#5a5ac8" stroke-width="1"/><path d="M-7 14L4 1" stroke="#5a5ac8" stroke-width="1"/><path d="M1 14L12 1" stroke="#5a5ac8" stroke-width="1"/><path d="M9 14L20 1" stroke="#5a5ac8" stroke-width="1"/><path d="M17 14L28 1" stroke="#5a5ac8" stroke-width="1"/><path d="M25 14L36 1" stroke="#5a5ac8" stroke-width="1"/><path d="M33 14L44 1" stroke="#5a5ac8" stroke-width="1"/><path d="M41 14L52 1" stroke="#5a5ac8" stroke-width="1"/><path d="M49 14L60 1" stroke="#5a5ac8" stroke-width="1"/><path d="M57 14L68 1" stroke="#5a5ac8" stroke-width="1"/><path d="M65 14L76 1" stroke="#5a5ac8" stroke-width="1"/></g><path d="M0 0.5H56M0 14.5H56" stroke="#5a5ac8" stroke-width="1"/></svg>
<svg class="a" style="left:500px;top:306px;" width="56" height="15" viewBox="0 0 56 15"><defs><clipPath id="hc5"><rect x="0" y="0" width="56" height="15"/></clipPath></defs><g clip-path="url(#hc5)"><rect x="0" y="0" width="56" height="15" fill="#e8eafa"/><path d="M-15 14L-4 1" stroke="#5a5ac8" stroke-width="1"/><path d="M-7 14L4 1" stroke="#5a5ac8" stroke-width="1"/><path d="M1 14L12 1" stroke="#5a5ac8" stroke-width="1"/><path d="M9 14L20 1" stroke="#5a5ac8" stroke-width="1"/><path d="M17 14L28 1" stroke="#5a5ac8" stroke-width="1"/><path d="M25 14L36 1" stroke="#5a5ac8" stroke-width="1"/><path d="M33 14L44 1" stroke="#5a5ac8" stroke-width="1"/><path d="M41 14L52 1" stroke="#5a5ac8" stroke-width="1"/><path d="M49 14L60 1" stroke="#5a5ac8" stroke-width="1"/><path d="M57 14L68 1" stroke="#5a5ac8" stroke-width="1"/><path d="M65 14L76 1" stroke="#5a5ac8" stroke-width="1"/></g><path d="M0 0.5H56M0 14.5H56" stroke="#5a5ac8" stroke-width="1"/></svg>
<div class="a" style="left:197px;top:500px;width:554px;height:16px;background:#f0f0f0;"></div>
<div class="a" style="left:198px;top:501px;width:15px;height:15px;background:#ffffff;box-shadow:inset 0 0 0 1px #b8b8b8;"></div>
<svg class="a" style="left:203px;top:505px;" width="5" height="8" viewBox="0 0 5 8"><path d="M5 0v8L0 4z" fill="#555"/></svg>
<div class="a" style="left:441px;top:501px;width:64px;height:15px;background:#ffffff;box-shadow:inset 0 0 0 1px #b8b8b8;"></div>
<div class="a" style="left:735px;top:501px;width:15px;height:15px;background:#ffffff;box-shadow:inset 0 0 0 1px #b8b8b8;"></div>
<svg class="a" style="left:740px;top:505px;" width="5" height="8" viewBox="0 0 5 8"><path d="M0 0v8l5-4z" fill="#555"/></svg>
<div class="a" style="left:13px;top:515px;width:98px;height:22px;background:#ffffff;box-shadow:inset 0 0 0 1px #adadad;"></div>
<div class="a t" style="left:19.00px;top:521.00px;font-size:12.00px;line-height:12.00px;font-weight:400;color:#262626;transform:scaleX(0.965);transform-origin:left;">Add Attendees...</div>
<div class="a" style="left:116px;top:515px;width:75px;height:22px;background:#ffffff;box-shadow:inset 0 0 0 1px #adadad;"></div>
<div class="a t" style="left:122.30px;top:521.00px;font-size:12.00px;line-height:12.00px;font-weight:400;color:#262626;">Options</div>
<svg class="a" style="left:179px;top:525px;" width="5" height="3" viewBox="0 0 5 3"><path d="M0 0h5L2.5 3z" fill="#555"/></svg>
<div class="a" style="left:13px;top:547px;width:98px;height:22px;background:#ffffff;box-shadow:inset 0 0 0 1px #adadad;"></div>
<div class="a t" style="left:28.40px;top:553.00px;font-size:12.00px;line-height:12.00px;font-weight:400;color:#262626;transform:scaleX(0.922);transform-origin:left;">Add Rooms...</div>
<div class="a t" style="left:203.30px;top:529.00px;font-size:12.00px;line-height:12.00px;font-weight:400;color:#444;transform:scaleX(0.935);transform-origin:left;">Start time</div>
<div class="a t" style="left:203.30px;top:555.00px;font-size:12.00px;line-height:12.00px;font-weight:400;color:#444;transform:scaleX(0.929);transform-origin:left;">End time</div>
<div class="a" style="left:271px;top:523px;width:131px;height:20px;background:#ffffff;box-shadow:inset 0 0 0 1px #ababab;"></div>
<div class="a t" style="left:275.40px;top:528.00px;font-size:12.00px;line-height:12.00px;font-weight:400;color:#1a1a1a;transform:scaleX(0.936);transform-origin:left;">Wed 9/30/2015</div>
<svg class="a" style="left:384px;top:525px;" width="16" height="15" viewBox="0 0 16 15"><rect x="0" y="0" width="16" height="15" fill="#fff"/><rect x="0" y="0" width="16" height="15" fill="#6d6d6d"/><rect x="1" y="3" width="14" height="11" fill="#a8a8a8"/><rect x="0" y="0" width="16" height="2" fill="#6d6d6d"/><rect x="1" y="3" width="2" height="2" fill="#fff"/><rect x="4" y="3" width="2" height="2" fill="#fff"/><rect x="7" y="3" width="2" height="2" fill="#fff"/><rect x="10" y="3" width="2" height="2" fill="#fff"/><rect x="13" y="3" width="2" height="2" fill="#fff"/><rect x="1" y="6" width="2" height="2" fill="#fff"/><rect x="4" y="6" width="2" height="2" fill="#fff"/><rect x="7" y="6" width="2" height="2" fill="#fff"/><rect x="10" y="6" width="2" height="2" fill="#fff"/><rect x="13" y="6" width="2" height="2" fill="#fff"/><rect x="1" y="9" width="2" height="2" fill="#fff"/><rect x="4" y="9" width="2" height="2" fill="#fff"/><rect x="7" y="9" width="2" height="2" fill="#fff"/><rect x="10" y="9" width="2" height="2" fill="#fff"/><rect x="13" y="9" width="2" height="2" fill="#fff"/><rect x="1" y="12" width="2" height="2" fill="#fff"/><rect x="4" y="12" width="2" height="2" fill="#fff"/><rect x="7" y="12" width="2" height="2" fill="#fff"/><rect x="10" y="12" width="2" height="2" fill="#fff"/><rect x="13" y="12" width="2" height="2" fill="#fff"/><rect x="9" y="5" width="4" height="4" fill="#e8782a"/><rect x="10" y="6" width="2" height="2" fill="#fff"/></svg>
<div class="a" style="left:409px;top:523px;width:90px;height:20px;background:#ffffff;box-shadow:inset 0 0 0 1px #ababab;"></div>
<div class="a t" style="left:413.40px;top:528.00px;font-size:12.00px;line-height:12.00px;font-weight:400;color:#1a1a1a;transform:scaleX(0.873);transform-origin:left;">2:00 PM</div>
<svg class="a" style="left:488px;top:532px;" width="5" height="3" viewBox="0 0 5 3"><path d="M0 0h5L2.5 3z" fill="#555"/></svg>
<div class="a" style="left:271px;top:549px;width:131px;height:20px;background:#ffffff;box-shadow:inset 0 0 0 1px #ababab;"></div>
<div class="a t" style="left:275.40px;top:554.00px;font-size:12.00px;line-height:12.00px;font-weight:400;color:#1a1a1a;transform:scaleX(0.936);transform-origin:left;">Wed 9/30/2015</div>
<svg class="a" style="left:384px;top:551px;" width="16" height="15" viewBox="0 0 16 15"><rect x="0" y="0" width="16" height="15" fill="#fff"/><rect x="0" y="0" width="16" height="15" fill="#6d6d6d"/><rect x="1" y="3" width="14" height="11" fill="#a8a8a8"/><rect x="0" y="0" width="16" height="2" fill="#6d6d6d"/><rect x="1" y="3" width="2" height="2" fill="#fff"/><rect x="4" y="3" width="2" height="2" fill="#fff"/><rect x="7" y="3" width="2" height="2" fill="#fff"/><rect x="10" y="3" width="2" height="2" fill="#fff"/><rect x="13" y="3" width="2" height="2" fill="#fff"/><rect x="1" y="6" width="2" height="2" fill="#fff"/><rect x="4" y="6" width="2" height="2" fill="#fff"/><rect x="7" y="6" width="2" height="2" fill="#fff"/><rect x="10" y="6" width="2" height="2" fill="#fff"/><rect x="13" y="6" width="2" height="2" fill="#fff"/><rect x="1" y="9" width="2" height="2" fill="#fff"/><rect x="4" y="9" width="2" height="2" fill="#fff"/><rect x="7" y="9" width="2" height="2" fill="#fff"/><rect x="10" y="9" width="2" height="2" fill="#fff"/><rect x="13" y="9" width="2" height="2" fill="#fff"/><rect x="1" y="12" width="2" height="2" fill="#fff"/><rect x="4" y="12" width="2" height="2" fill="#fff"/><rect x="7" y="12" width="2" height="2" fill="#fff"/><rect x="10" y="12" width="2" height="2" fill="#fff"/><rect x="13" y="12" width="2" height="2" fill="#fff"/><rect x="9" y="5" width="4" height="4" fill="#e8782a"/><rect x="10" y="6" width="2" height="2" fill="#fff"/></svg>
<div class="a" style="left:409px;top:549px;width:90px;height:20px;background:#ffffff;box-shadow:inset 0 0 0 1px #ababab;"></div>
<div class="a t" style="left:413.40px;top:554.00px;font-size:12.00px;line-height:12.00px;font-weight:400;color:#1a1a1a;transform:scaleX(0.873);transform-origin:left;">3:00 PM</div>
<svg class="a" style="left:488px;top:558px;" width="5" height="3" viewBox="0 0 5 3"><path d="M0 0h5L2.5 3z" fill="#555"/></svg>
<div class="a" style="left:13px;top:588px;width:11px;height:12px;background:#4040e0;"></div>
<div class="a t" style="left:26.60px;top:589.00px;font-size:12.00px;line-height:12.00px;font-weight:400;color:#444;transform:scaleX(0.881);transform-origin:left;">Busy</div>
<svg class="a" style="left:59px;top:588px;" width="11" height="12" viewBox="0 0 11 12"><rect x="0" y="0" width="11" height="12" fill="#e8eafa"/><path d="M0.5 12V0.5H11" fill="none" stroke="#999"/><path d="M1 8.5L8.5 1M6 11.5L10.5 7" stroke="#5050d8" stroke-width="1.2"/></svg>
<div class="a t" style="left:73.90px;top:589.00px;font-size:12.00px;line-height:12.00px;font-weight:400;color:#444;transform:scaleX(0.927);transform-origin:left;">Tentative</div>
<div class="a" style="left:130px;top:588px;width:11px;height:12px;background:#8b008b;"></div>
<div class="a t" style="left:145.70px;top:589.00px;font-size:12.00px;line-height:12.00px;font-weight:400;color:#444;">Out of Office</div>
<svg class="a" style="left:223px;top:588px;" width="11" height="12" viewBox="0 0 11 12"><path d="M0.5 12V0.5H11" fill="none" stroke="#999"/><rect x="1" y="1" width="1" height="1" fill="#222"/><rect x="5" y="1" width="1" height="1" fill="#222"/><rect x="9" y="1" width="1" height="1" fill="#222"/><rect x="3" y="3" width="1" height="1" fill="#222"/><rect x="7" y="3" width="1" height="1" fill="#222"/><rect x="1" y="5" width="1" height="1" fill="#222"/><rect x="5" y="5" width="1" height="1" fill="#222"/><rect x="9" y="5" width="1" height="1" fill="#222"/><rect x="3" y="7" width="1" height="1" fill="#222"/><rect x="7" y="7" width="1" height="1" fill="#222"/><rect x="1" y="9" width="1" height="1" fill="#222"/><rect x="5" y="9" width="1" height="1" fill="#222"/><rect x="9" y="9" width="1" height="1" fill="#222"/><rect x="3" y="11" width="1" height="1" fill="#222"/><rect x="7" y="11" width="1" height="1" fill="#222"/></svg>
<div class="a t" style="left:238.00px;top:589.00px;font-size:12.00px;line-height:12.00px;font-weight:400;color:#444;transform:scaleX(0.969);transform-origin:left;">Working Elsewhere</div>
<svg class="a" style="left:347px;top:588px;" width="11" height="12" viewBox="0 0 11 12"><path d="M0.5 12V0.5H11" fill="none" stroke="#aaa"/><path d="M1 1l9.5 9.5M9 1.2l1.5 1.5M1 9.5l2 2" stroke="#000" stroke-width="1.2"/></svg>
<div class="a t" style="left:362.00px;top:589.00px;font-size:12.00px;line-height:12.00px;font-weight:400;color:#444;">No Information</div>
<div class="a" style="left:452px;top:588px;width:11px;height:12px;background:#e0e0e0;"></div>
<svg class="a" style="left:452px;top:588px;" width="11" height="12" viewBox="0 0 11 12"><path d="M0.5 12V0.5H11" fill="none" stroke="#999"/></svg>
<div class="a t" style="left:467.50px;top:589.00px;font-size:12.00px;line-height:12.00px;font-weight:400;color:#444;">Outside of working hours</div>
<div class="a" style="left:2px;top:610px;width:766px;height:1px;background:#d8d8d8;"></div>
<div class="a t" style="left:12.00px;top:625.00px;font-size:12.00px;line-height:12.00px;font-weight:700;color:#333;transform:scaleX(0.913);transform-origin:left;">Student 00</div>
<div class="a t" style="left:72.00px;top:625.00px;font-size:12.00px;line-height:12.00px;font-weight:400;color:#444;transform:scaleX(0.937);transform-origin:left;">No Items</div>
<div class="a" style="left:574px;top:613px;width:40px;height:40px;background:#1e7ad0;"></div>
<svg class="a" style="left:576px;top:615px;" width="36" height="36" viewBox="0 0 36 36"><g transform="scale(1.0000)"><rect width="36" height="36" fill="#aeaeae"/><path d="M3.5 36V27.5Q3.5 20.5 11 20.5H25Q32.5 20.5 32.5 27.5V36z" fill="#fff"/><ellipse cx="18" cy="12.5" rx="7.6" ry="8.8" fill="#aeaeae" opacity="0.6"/><ellipse cx="18" cy="12.5" rx="7" ry="8.3" fill="#fff"/></g></svg>
<svg class="a" style="left:618px;top:615px;" width="36" height="36" viewBox="0 0 36 36"><g transform="scale(1.0000)"><rect width="36" height="36" fill="#aeaeae"/><path d="M3.5 36V27.5Q3.5 20.5 11 20.5H25Q32.5 20.5 32.5 27.5V36z" fill="#fff"/><ellipse cx="18" cy="12.5" rx="7.6" ry="8.8" fill="#aeaeae" opacity="0.6"/><ellipse cx="18" cy="12.5" rx="7" ry="8.3" fill="#fff"/></g></svg>
<svg class="a" style="left:660px;top:615px;" width="36" height="36" viewBox="0 0 36 36"><g transform="scale(1.0000)"><rect width="36" height="36" fill="#aeaeae"/><path d="M3.5 36V27.5Q3.5 20.5 11 20.5H25Q32.5 20.5 32.5 27.5V36z" fill="#fff"/><ellipse cx="18" cy="12.5" rx="7.6" ry="8.8" fill="#aeaeae" opacity="0.6"/><ellipse cx="18" cy="12.5" rx="7" ry="8.3" fill="#fff"/></g></svg>
<svg class="a" style="left:702px;top:615px;" width="36" height="36" viewBox="0 0 36 36"><g transform="scale(1.0000)"><rect width="36" height="36" fill="#aeaeae"/><path d="M3.5 36V27.5Q3.5 20.5 11 20.5H25Q32.5 20.5 32.5 27.5V36z" fill="#fff"/><ellipse cx="18" cy="12.5" rx="7.6" ry="8.8" fill="#aeaeae" opacity="0.6"/><ellipse cx="18" cy="12.5" rx="7" ry="8.3" fill="#fff"/></g></svg>
<svg class="a" style="left:744px;top:630px;" width="5" height="8" viewBox="0 0 5 8"><path d="M0 0v8l5-4z" fill="#d0d0d0"/></svg>
<svg class="a" style="left:754px;top:621px;" width="11" height="7" viewBox="0 0 11 7"><path d="M1 6l4.5-4.5L10 6" fill="none" stroke="#444" stroke-width="1.6"/></svg>
<svg class="a" style="left:754px;top:638px;" width="11" height="10" viewBox="0 0 11 10"><path d="M1 1l9 8M10 1L1 9" stroke="#444" stroke-width="1.6"/></svg>
<div class="a t" style="left:789.00px;top:167.00px;font-size:21.00px;line-height:21.00px;font-weight:400;color:#3a86d4;transform:scaleX(0.956);transform-origin:left;">Room Finder</div>
<svg class="a" style="left:935px;top:173px;" width="10" height="5" viewBox="0 0 10 5"><path d="M0 0h10L5 5z" fill="#666"/></svg>
<svg class="a" style="left:952px;top:170px;" width="11" height="11" viewBox="0 0 11 11"><path d="M1 1l9 9M10 1L1 10" stroke="#333" stroke-width="2"/></svg>
<div class="a" style="left:782px;top:193px;width:169px;height:456px;background:#ffffff;"></div>
<div class="a" style="left:951px;top:193px;width:16px;height:456px;background:#f0f0f0;"></div>
<svg class="a" style="left:955px;top:199px;" width="8" height="6" viewBox="0 0 8 6"><path d="M0.8 5.5L4 1.8l3.2 3.7" fill="none" stroke="#444" stroke-width="2"/></svg>
<div class="a" style="left:951px;top:210px;width:15px;height:184px;background:#c8c8c8;"></div>
<svg class="a" style="left:955px;top:638px;" width="8" height="6" viewBox="0 0 8 6"><path d="M0.8 0.5L4 4.2l3.2-3.7" fill="none" stroke="#444" stroke-width="2"/></svg>
<svg class="a" style="left:807px;top:207px;" width="6" height="11" viewBox="0 0 6 11"><path d="M6 0v11L0 5.5z" fill="#222"/></svg>
<svg class="a" style="left:922px;top:207px;" width="6" height="11" viewBox="0 0 6 11"><path d="M0 0v11l6-5.5z" fill="#222"/></svg>
<div class="a t" style="left:823.50px;top:207.00px;font-size:12.00px;line-height:12.00px;font-weight:400;color:#222;transform:scaleX(0.925);transform-origin:left;">September, 2015</div>
<div class="a t" style="left:796.16px;top:229.00px;font-size:12.00px;line-height:12.00px;font-weight:400;color:#222;">Su</div>
<div class="a t" style="left:816.16px;top:229.00px;font-size:12.00px;line-height:12.00px;font-weight:400;color:#222;">Mo</div>
<div class="a t" style="left:838.72px;top:229.00px;font-size:12.00px;line-height:12.00px;font-weight:400;color:#222;">Tu</div>
<div class="a t" style="left:857.61px;top:229.00px;font-size:12.00px;line-height:12.00px;font-weight:400;color:#222;">We</div>
<div class="a t" style="left:880.50px;top:229.00px;font-size:12.00px;line-height:12.00px;font-weight:400;color:#222;">Th</div>
<div class="a t" style="left:902.84px;top:229.00px;font-size:12.00px;line-height:12.00px;font-weight:400;color:#222;">Fr</div>
<div class="a t" style="left:922.16px;top:229.00px;font-size:12.00px;line-height:12.00px;font-weight:400;color:#222;">Sa</div>
<div class="a" style="left:793px;top:242px;width:147px;height:90px;background:#dedede;"></div>
<div class="a" style="left:814px;top:287px;width:105px;height:45px;background:#ffffff;"></div>
<div class="a" style="left:856px;top:302px;width:21px;height:15px;background:#f9c850;"></div>
<div class="a" style="left:814px;top:287px;width:21px;height:15px;background:#ffffff;box-shadow:inset 0 0 0 1px #2b7cd3;"></div>
<div class="a t" style="left:796.83px;top:245.00px;font-size:12.00px;line-height:12.00px;font-weight:400;color:#a0a0a0;">30</div>
<div class="a t" style="left:817.83px;top:245.00px;font-size:12.00px;line-height:12.00px;font-weight:400;color:#a0a0a0;">31</div>
<div class="a t" style="left:842.16px;top:245.00px;font-size:12.00px;line-height:12.00px;font-weight:400;color:#222;">1</div>
<div class="a t" style="left:863.16px;top:245.00px;font-size:12.00px;line-height:12.00px;font-weight:400;color:#222;">2</div>
<div class="a t" style="left:884.16px;top:245.00px;font-size:12.00px;line-height:12.00px;font-weight:400;color:#222;">3</div>
<div class="a t" style="left:905.16px;top:245.00px;font-size:12.00px;line-height:12.00px;font-weight:400;color:#222;">4</div>
<div class="a t" style="left:926.16px;top:245.00px;font-size:12.00px;line-height:12.00px;font-weight:400;color:#222;">5</div>
<div class="a t" style="left:800.16px;top:260.00px;font-size:12.00px;line-height:12.00px;font-weight:400;color:#222;">6</div>
<div class="a t" style="left:821.16px;top:260.00px;font-size:12.00px;line-height:12.00px;font-weight:400;color:#222;">7</div>
<div class="a t" style="left:842.16px;top:260.00px;font-size:12.00px;line-height:12.00px;font-weight:400;color:#222;">8</div>
<div class="a t" style="left:863.16px;top:260.00px;font-size:12.00px;line-height:12.00px;font-weight:400;color:#222;">9</div>
<div class="a t" style="left:880.83px;top:260.00px;font-size:12.00px;line-height:12.00px;font-weight:400;color:#222;">10</div>
<div class="a t" style="left:902.27px;top:260.00px;font-size:12.00px;line-height:12.00px;font-weight:400;color:#222;">11</div>
<div class="a t" style="left:922.83px;top:260.00px;font-size:12.00px;line-height:12.00px;font-weight:400;color:#222;">12</div>
<div class="a t" style="left:796.83px;top:275.00px;font-size:12.00px;line-height:12.00px;font-weight:400;color:#222;">13</div>
<div class="a t" style="left:817.83px;top:275.00px;font-size:12.00px;line-height:12.00px;font-weight:400;color:#222;">14</div>
<div class="a t" style="left:838.83px;top:275.00px;font-size:12.00px;line-height:12.00px;font-weight:400;color:#222;">15</div>
<div class="a t" style="left:859.83px;top:275.00px;font-size:12.00px;line-height:12.00px;font-weight:400;color:#222;">16</div>
<div class="a t" style="left:880.83px;top:275.00px;font-size:12.00px;line-height:12.00px;font-weight:400;color:#222;">17</div>
<div class="a t" style="left:901.83px;top:275.00px;font-size:12.00px;line-height:12.00px;font-weight:400;color:#222;">18</div>
<div class="a t" style="left:922.83px;top:275.00px;font-size:12.00px;line-height:12.00px;font-weight:400;color:#222;">19</div>
<div class="a t" style="left:796.83px;top:290.00px;font-size:12.00px;line-height:12.00px;font-weight:400;color:#222;">20</div>
<div class="a t" style="left:817.83px;top:290.00px;font-size:12.00px;line-height:12.00px;font-weight:400;color:#222;">21</div>
<div class="a t" style="left:838.83px;top:290.00px;font-size:12.00px;line-height:12.00px;font-weight:400;color:#222;">22</div>
<div class="a t" style="left:859.83px;top:290.00px;font-size:12.00px;line-height:12.00px;font-weight:400;color:#222;">23</div>
<div class="a t" style="left:880.83px;top:290.00px;font-size:12.00px;line-height:12.00px;font-weight:400;color:#222;">24</div>
<div class="a t" style="left:901.83px;top:290.00px;font-size:12.00px;line-height:12.00px;font-weight:400;color:#222;">25</div>
<div class="a t" style="left:922.83px;top:290.00px;font-size:12.00px;line-height:12.00px;font-weight:400;color:#222;">26</div>
<div class="a t" style="left:796.83px;top:305.00px;font-size:12.00px;line-height:12.00px;font-weight:400;color:#222;">27</div>
<div class="a t" style="left:817.83px;top:305.00px;font-size:12.00px;line-height:12.00px;font-weight:400;color:#222;">28</div>
<div class="a t" style="left:838.83px;top:305.00px;font-size:12.00px;line-height:12.00px;font-weight:400;color:#222;">29</div>
<div class="a t" style="left:859.83px;top:305.00px;font-size:12.00px;line-height:12.00px;font-weight:400;color:#222;">30</div>
<div class="a t" style="left:884.16px;top:305.00px;font-size:12.00px;line-height:12.00px;font-weight:400;color:#a0a0a0;">1</div>
<div class="a t" style="left:905.16px;top:305.00px;font-size:12.00px;line-height:12.00px;font-weight:400;color:#a0a0a0;">2</div>
<div class="a t" style="left:926.16px;top:305.00px;font-size:12.00px;line-height:12.00px;font-weight:400;color:#a0a0a0;">3</div>
<div class="a t" style="left:800.16px;top:320.00px;font-size:12.00px;line-height:12.00px;font-weight:400;color:#a0a0a0;">4</div>
<div class="a t" style="left:821.16px;top:320.00px;font-size:12.00px;line-height:12.00px;font-weight:400;color:#a0a0a0;">5</div>
<div class="a t" style="left:842.16px;top:320.00px;font-size:12.00px;line-height:12.00px;font-weight:400;color:#a0a0a0;">6</div>
<div class="a t" style="left:863.16px;top:320.00px;font-size:12.00px;line-height:12.00px;font-weight:400;color:#a0a0a0;">7</div>
<div class="a t" style="left:884.16px;top:320.00px;font-size:12.00px;line-height:12.00px;font-weight:400;color:#a0a0a0;">8</div>
<div class="a t" style="left:905.16px;top:320.00px;font-size:12.00px;line-height:12.00px;font-weight:400;color:#a0a0a0;">9</div>
<div class="a t" style="left:922.83px;top:320.00px;font-size:12.00px;line-height:12.00px;font-weight:400;color:#a0a0a0;">10</div>
<div class="a" style="left:790px;top:349px;width:17px;height:16px;background:#ffffff;box-shadow:inset 0 0 0 1px #8a8a8a;"></div>
<div class="a t" style="left:810.80px;top:351.00px;font-size:12.00px;line-height:12.00px;font-weight:400;color:#333;transform:scaleX(0.988);transform-origin:left;">Good</div>
<div class="a" style="left:849px;top:349px;width:17px;height:16px;background:#c6def8;box-shadow:inset 0 0 0 1px #9a9a9a;"></div>
<div class="a t" style="left:869.50px;top:351.00px;font-size:12.00px;line-height:12.00px;font-weight:400;color:#333;transform:scaleX(0.919);transform-origin:left;">Fair</div>
<div class="a" style="left:898px;top:349px;width:17px;height:16px;background:#7ba7e1;box-shadow:inset 0 0 0 1px #8a9ab0;"></div>
<div class="a t" style="left:918.00px;top:351.00px;font-size:12.00px;line-height:12.00px;font-weight:400;color:#333;transform:scaleX(0.947);transform-origin:left;">Poor</div>
<div class="a t" style="left:790.60px;top:376.00px;font-size:12.00px;line-height:12.00px;font-weight:400;color:#444;transform:scaleX(0.946);transform-origin:left;">Choose an available room:</div>
<div class="a" style="left:790px;top:392px;width:152px;height:172px;background:#ffffff;box-shadow:inset 0 0 0 1px #9a9a9a;"></div>
<div class="a t" style="left:795.30px;top:397.00px;font-size:12.00px;line-height:12.00px;font-weight:400;color:#1a1a1a;transform:scaleX(0.906);transform-origin:left;">None</div>
<div class="a" style="left:792px;top:411px;width:148px;height:17px;background:#e5f1fb;"></div>
<div class="a t" style="left:795.30px;top:414.00px;font-size:12.00px;line-height:12.00px;font-weight:400;color:#1a1a1a;transform:scaleX(0.938);transform-origin:left;">Conference Room B</div>
<div class="a t" style="left:795.30px;top:431.00px;font-size:12.00px;line-height:12.00px;font-weight:400;color:#1a1a1a;transform:scaleX(0.944);transform-origin:left;">Conference Room A</div>
<div class="a t" style="left:790.60px;top:572.00px;font-size:12.00px;line-height:12.00px;font-weight:400;color:#444;transform:scaleX(0.938);transform-origin:left;">Suggested times:</div>
<div class="a" style="left:790px;top:587px;width:152px;height:62px;background:#ffffff;box-shadow:inset 0 0 0 1px #9a9a9a;"></div>
<div class="a" style="left:791px;top:588px;width:134px;height:40px;background:#e5f1fb;"></div>
<div class="a" style="left:791px;top:628px;width:134px;height:1px;background:#444;"></div>
<div class="a t" style="left:796.00px;top:597.00px;font-size:12.00px;line-height:12.00px;font-weight:700;color:#1a1a1a;transform:scaleX(0.917);transform-origin:left;">2:00 PM - 3:00 PM</div>
<div class="a t" style="left:796.00px;top:610.00px;font-size:12.00px;line-height:12.00px;font-weight:400;color:#1a1a1a;transform:scaleX(0.949);transform-origin:left;">Current meeting ti...</div>
<div class="a t" style="left:796.00px;top:637.00px;font-size:12.00px;line-height:12.00px;font-weight:700;color:#1a1a1a;transform:scaleX(0.933);transform-origin:left;">8:00 AM - 9:00 AM</div>
<div class="a" style="left:925px;top:588px;width:16px;height:61px;background:#f0f0f0;"></div>
<svg class="a" style="left:929px;top:594px;" width="8" height="6" viewBox="0 0 8 6"><path d="M0.8 5.2L4 1.5l3.2 3.7" fill="none" stroke="#555" stroke-width="1.4"/></svg>
<div class="a" style="left:926px;top:605px;width:14px;height:30px;background:#c8c8c8;"></div>
<div class="a" style="left:782px;top:649px;width:193px;height:6px;background:#e6e6e6;"></div>
<div class="a" style="left:775px;top:655px;width:200px;height:1px;background:#fbf6f0;"></div>
<div class="a" style="left:429px;top:657px;width:472px;height:1px;background:repeating-linear-gradient(90deg,#4a3a30 0 3px,#a89c94 3px 5px,#6a5a50 5px 7px,#b0a49c 7px 9px)"></div>
</body></html>
